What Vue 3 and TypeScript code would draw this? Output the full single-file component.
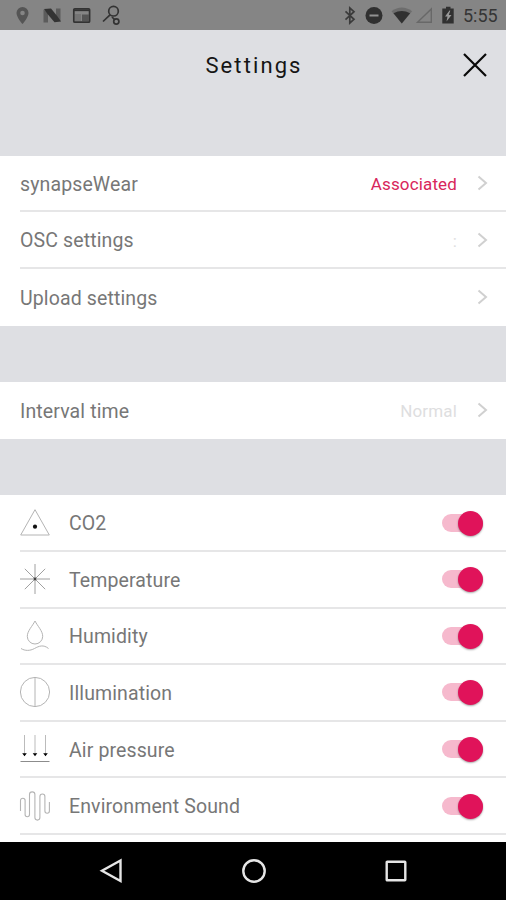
<script setup lang="ts">
import { reactive } from 'vue'

interface LinkRow {
  label: string
  value?: string
  tone?: 'accent' | 'muted'
}
interface SensorRow {
  label: string
  icon: string
  on: boolean
}

const connection: LinkRow[] = [
  { label: 'synapseWear', value: 'Associated', tone: 'accent' },
  { label: 'OSC settings', value: ':', tone: 'muted' },
  { label: 'Upload settings' },
]
const timing: LinkRow[] = [{ label: 'Interval time', value: 'Normal', tone: 'muted' }]
const groups = [connection, timing]

const sensors = reactive<SensorRow[]>([
  { label: 'CO2', icon: 'co2', on: true },
  { label: 'Temperature', icon: 'temp', on: true },
  { label: 'Humidity', icon: 'humidity', on: true },
  { label: 'Illumination', icon: 'light', on: true },
  { label: 'Air pressure', icon: 'pressure', on: true },
  { label: 'Environment Sound', icon: 'sound', on: true },
])
</script>

<template>
  <div class="screen">
    <div class="status">
      <svg class="status-left" width="130" height="30" viewBox="0 0 130 30">
        <path fill="#555" fill-rule="evenodd" d="M22.5 7a6 6 0 0 0-6 6c0 4.500 6 11 6 11s6-6.500 6-11a6 6 0 0 0-6-6zm0 3.700a2.300 2.300 0 1 1 0 4.600a2.300 2.300 0 0 1 0-4.600z" />
        <path fill="#5c5c5c" d="M43.500 9.500l4.500 3v10h-4.500zM60.500 8.500v13l-4.500-3v-10z" />
        <path fill="#333" d="M44 9l7-.5 6.500 8 3.500 5-6.500 .8-7-8.300z" />
        <g fill="none" stroke="#333" stroke-width="1.700">
          <rect x="73.800" y="8.800" width="15.800" height="13.400" rx="1" />
          <path d="M73 10.300h17" />
        </g>
        <path fill="#747474" d="M75 14h6v7h-6z" />
        <path fill="#555" d="M82 14.500h7v6.500h-7z" />
        <g fill="none" stroke="#333" stroke-width="1.700">
          <circle cx="113.500" cy="11.200" r="4.800" />
          <path d="M110 14.800L103 21.500" />
          <circle cx="116.300" cy="21.500" r="2.600" />
          <path d="M112 17l2.500 2.500" />
        </g>
      </svg>
      <svg class="status-right" width="130" height="30" viewBox="335 0 130 30">
        <path fill="none" stroke="#3b3b3b" stroke-width="1.700" d="M345.500 11.300l8.500 8-4.200 3.700V8l4.200 3.700-8.500 8" />
        <circle cx="374" cy="15.500" r="8.500" fill="#303030" />
        <path d="M369.500 15.500h9" stroke="#929292" stroke-width="2" />
        <path fill="#6d6d6d" d="M391.500 11.200q10.300-7.500 20.600 0L401.800 23.500z" />
        <path fill="#303030" d="M393.500 13.200q8.300-4.500 16.600 0L401.800 23.400z" />
        <path fill="none" stroke="#686868" stroke-width="1.400" d="M431.300 9v13.300h-13.800z" />
        <path fill="#303030" d="M446 8.500v-1.800h4.500v1.800h3.200v15h-11.400v-15z" />
        <path fill="#999" d="M449.500 10.500l-4.500 6h2.500l-1 5 5-6.500h-2.700l1.500-4.500z" />
      </svg>
      <span class="clock">5:55</span>
    </div>

    <header class="header">
      <h1 class="title">Settings</h1>
      <button class="close" aria-label="Close">
        <svg width="26" height="26" viewBox="0 0 26 26"><path d="M2 2l22 22M24 2L2 24" stroke="#090909" stroke-width="2.200" /></svg>
      </button>
    </header>

    <main class="content">
      <section v-for="(group, g) in groups" :key="g" class="group">
        <div v-for="row in group" :key="row.label" class="row">
          <span class="label">{{ row.label }}</span>
          <span v-if="row.value" class="value" :class="row.tone">{{ row.value }}</span>
          <svg class="chevron" width="11" height="16" viewBox="0 0 11 16"><path d="M1.500 1.500L9 8l-7.500 6.500" fill="none" stroke="#d0d0d0" stroke-width="2" /></svg>
        </div>
      </section>

      <section class="group sensors">
        <div v-for="sensor in sensors" :key="sensor.label" class="row">
          <svg class="icon" width="30" height="30" viewBox="0 0 30 30" fill="none" stroke="#b4b4b4" stroke-width="1">
            <template v-if="sensor.icon === 'co2'">
              <path d="M15 1.700L29.300 27H.700z" />
              <circle cx="15" cy="18.700" r="2.100" fill="#111" stroke="none" />
            </template>
            <template v-else-if="sensor.icon === 'temp'">
              <path d="M15 0v30M0 15h30M4.800 4.800l20.400 20.400M25.200 4.800L4.800 25.200" stroke="#a0a0a0" />
              <circle cx="15" cy="15" r="1.400" fill="#444" stroke="none" />
            </template>
            <template v-else-if="sensor.icon === 'humidity'">
              <path d="M15 0C12.500 5 7.300 10 7.300 15.300a7.700 7.700 0 0 0 15.400 0C22.700 10 17.500 5 15 0z" />
              <path d="M1 27.500c4 2.500 9 2.500 13.500 0s9-4.200 14 0" />
            </template>
            <template v-else-if="sensor.icon === 'light'">
              <circle cx="15" cy="15" r="14.600" />
              <path d="M15 .5v29" />
            </template>
            <template v-else-if="sensor.icon === 'pressure'">
              <path d="M4.500 1v19M15 1v19M25.500 1v19" stroke="#bbb" />
              <path d="M.5 27.500h29" stroke="#8c8c8c" />
              <path d="M2.200 19.200h4.600L4.500 22.200zM12.700 19.200h4.600L15 22.200zM23.200 19.200h4.600l-2.300 3z" fill="#000" stroke="none" />
            </template>
            <template v-else>
              <path d="M.5 20V9.500a2.300 2.300 0 0 1 4.600 0v14a2.200 2.200 0 0 0 4.400 0V3.600a2.700 2.700 0 0 1 5.400 0v23a2.500 2.500 0 0 0 5 0V5.500a2.500 2.500 0 0 1 5 0V20a2.200 2.200 0 0 0 4.500 0v-9" stroke-width="1.100" />
            </template>
          </svg>
          <span class="label">{{ sensor.label }}</span>
          <button class="toggle" role="switch" :aria-checked="sensor.on" :class="{ on: sensor.on }" :aria-label="sensor.label" @click="sensor.on = !sensor.on">
            <span class="thumb"></span>
          </button>
        </div>
      </section>
    </main>

    <nav class="nav">
      <svg width="24" height="26" viewBox="0 0 24 26"><path d="M21.500 2.500v20.500L3 12.800z" /></svg>
      <svg width="26" height="26" viewBox="0 0 26 26"><circle cx="13" cy="13" r="10.700" /></svg>
      <svg width="24" height="24" viewBox="0 0 24 24"><rect x="2.700" y="2.700" width="18.600" height="18.600" rx=".5" /></svg>
    </nav>
  </div>
</template>

<style>
body {
  margin: 0;
}
</style>

<style scoped>
.screen {
  width: 506px;
  height: 900px;
  display: flex;
  flex-direction: column;
  overflow: hidden;
  background: #dedfe3;
  font-family: Roboto, "Liberation Sans", sans-serif;
}
.status {
  height: 30px;
  flex: none;
  box-sizing: border-box;
  display: flex;
  align-items: center;
  background: #858585;
}
.status-right {
  margin-left: auto;
}
.clock {
  width: 41px;
  padding-top: 2px;
  box-sizing: border-box;
  margin-left: -2px;
  margin-right: 2px;
  font-size: 18px;
  line-height: 28px;
  color: #353535;
}
.header {
  height: 125.700px;
  flex: none;
  display: grid;
  grid-template-columns: 1fr auto 1fr;
  align-items: start;
}
.title {
  grid-column: 2;
  margin: 22px 0 0 2px;
  font-size: 22px;
  line-height: 28px;
  font-weight: 400;
  letter-spacing: 2.100px;
  color: #151515;
}
.close {
  grid-column: 3;
  justify-self: end;
  margin: 22px 18px 0 0;
  padding: 0;
  border: 0;
  background: none;
}
.close svg {
  display: block;
}
.content {
  flex: 1;
  min-height: 0;
  overflow: hidden;
  display: flex;
  flex-direction: column;
  gap: 56.500px;
}
.group {
  flex: none;
  background: #fff;
  display: flex;
  flex-direction: column;
}
.row {
  height: 56.650px;
  box-sizing: border-box;
  margin-left: 20px;
  padding-right: 18px;
  border-bottom: 2px solid #e6e6e7;
  display: flex;
  align-items: center;
}
.group:not(.sensors) .row:last-child {
  border-bottom: 0;
}
.sensors {
  height: 400px;
}
.label {
  flex: 1;
  font-size: 19.500px;
  line-height: 24px;
  padding-top: 3px;
  letter-spacing: 0.120px;
  color: #777;
}
.value {
  padding-top: 2px;
  font-size: 17px;
  letter-spacing: 0.150px;
  margin-right: 20px;
}
.accent {
  color: #d8265b;
}
.muted {
  color: #dedee0;
}
.icon {
  flex: none;
  overflow: visible;
  margin-right: 19px;
}
.toggle {
  position: relative;
  width: 41px;
  height: 18px;
  margin-right: 5px;
  padding: 0;
  border: 0;
  border-radius: 9px;
  background: #d0d0d0;
}
.toggle.on {
  background: #f6b9cd;
}
.thumb {
  position: absolute;
  top: -3px;
  left: 0;
  width: 25px;
  height: 25px;
  border-radius: 50%;
  background: #f3f3f3;
  box-shadow: 0 1px 2px rgba(0, 0, 0, 0.35);
}
.on .thumb {
  left: 16px;
  background: #e0135a;
}
.nav {
  flex: none;
  height: 58px;
  box-sizing: border-box;
  padding: 0 98px 0 99px;
  display: flex;
  align-items: center;
  justify-content: space-between;
  background: #000;
}
.nav svg {
  fill: none;
  stroke: #e6e6e6;
  stroke-width: 2.400;
}
</style>
